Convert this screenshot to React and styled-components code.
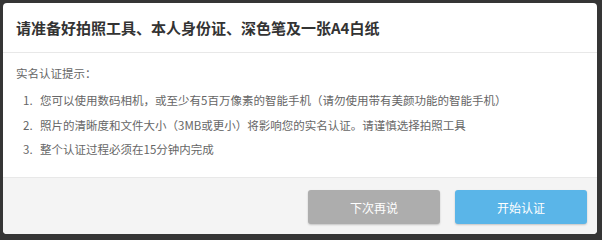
import React from 'react'
import { styled, createGlobalStyle } from 'styled-components';

const tips = [
  '您可以使用数码相机，或至少有5百万像素的智能手机（请勿使用带有美颜功能的智能手机）',
  '照片的清晰度和文件大小（3MB或更小）将影响您的实名认证。请谨慎选择拍照工具',
  '整个认证过程必须在15分钟内完成',
]

const App = () => {
  return (
    <>
      <GlobalStyle />
      <Modal>
        <Header>
          <Title>请准备好拍照工具、本人身份证、深色笔及一张A4白纸</Title>
        </Header>
        <Body>
          <Heading>实名认证提示：</Heading>
          <List>
            {tips.map((tip, i) => (
              <Item key={i}>
                <Num>{i + 1}.</Num>
                <span>{tip}</span>
              </Item>
            ))}
          </List>
        </Body>
        <Footer>
          <Button $kind="later">下次再说</Button>
          <Button $kind="start">开始认证</Button>
        </Footer>
      </Modal>
    </>
  )
}

export default App;

const GlobalStyle = createGlobalStyle`
html, body {
  margin: 0;
  background: #353535;
}
body {
  padding: 3px 5px 4px 3px;
  font-family: "Noto Sans CJK SC", "Noto Sans", sans-serif;
}
`
const Modal = styled.div`
  width: 594px;
  height: 231px;
  background: #fff;
  border-radius: 4px;
  overflow: hidden;
  display: flex;
  flex-direction: column;
  box-sizing: border-box;
`
const Header = styled.div`
  height: 49px;
  flex-shrink: 0;
  display: flex;
  align-items: center;
  padding-left: 13px;
  border-bottom: 1px solid #e8e8e8;
`
const Title = styled.div`
  font-size: 15px;
  font-weight: 700;
  color: #333;
`
const Body = styled.div`
  flex: 1;
  padding: 8px 13px 0;
  color: #666;
  font-size: 11.5px;
`
const Heading = styled.div`
  line-height: 24px;
`
const List = styled.div`
  margin-top: 3px;
`
const Item = styled.div`
  display: flex;
  line-height: 24.5px;
  padding-left: 7px;
  white-space: nowrap;
`
const Num = styled.span`
  width: 17px;
  flex-shrink: 0;
`
const Footer = styled.div`
  height: 57px;
  flex-shrink: 0;
  box-sizing: border-box;
  border-top: 1px solid #e8e8e8;
  background: #f4f4f4;
  display: flex;
  justify-content: flex-end;
  align-items: flex-start;
  gap: 15px;
  padding: 12px 10px 0 0;
`
const Button = styled.div`
  width: 132px;
  height: 34px;
  border-radius: 3px;
  background: ${p => p.$kind === 'start' ? '#5ab5e8' : '#adadad'};
  box-shadow: 0 1px 2px rgba(0, 0, 0, 0.2);
  color: #fff;
  font-size: 12px;
  display: flex;
  align-items: center;
  justify-content: center;
  cursor: pointer;
`
